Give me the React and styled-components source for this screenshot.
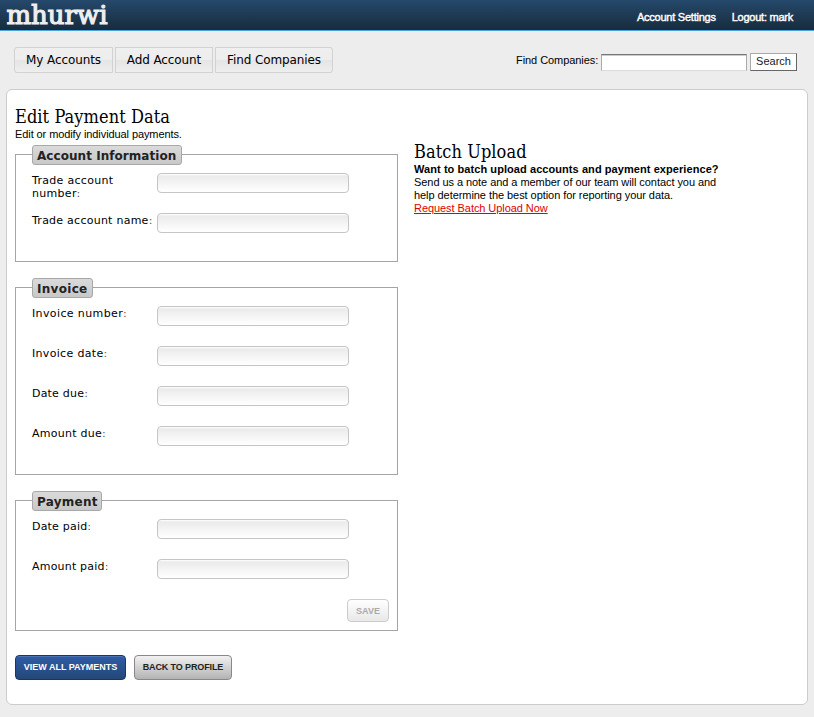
import React from "react";
import styled, { createGlobalStyle } from "styled-components";

const GlobalStyle = createGlobalStyle`
  *, *::before, *::after { box-sizing: border-box; }
  body {
    margin: 0;
    background: #ededed;
    color: #000;
    font: 11px/13px "Liberation Sans", Arial, sans-serif;
  }
`;

const Page = styled.div`
  min-height: 717px;
`;

const Header = styled.header`
  display: flex;
  justify-content: space-between;
  height: 31px;
  padding: 0 21px 0 6px;
  border-bottom: 1px solid #4aa3da;
  background: linear-gradient(#25486b, #172c3d);
`;

const Logo = styled.svg`
  display: block;
  width: 104px;
  height: 30px;
  overflow: visible;
  fill: #eee;
  stroke: #eee;
  stroke-width: 1.2px;
  font: 26px "DejaVu Serif", serif;
`;

const AccountLinks = styled.nav`
  display: flex;
  gap: 16px;
  padding-top: 11px;
`;

const AccountLink = styled.a`
  color: #fff;
  white-space: nowrap;
  -webkit-text-stroke: 0.4px #fff;
  letter-spacing: -0.24px;
`;

const Toolbar = styled.div`
  display: flex;
  justify-content: space-between;
  align-items: flex-start;
  height: 58px;
  padding: 16px 17px 0 14px;
`;

const Tabs = styled.nav`
  display: flex;
  gap: 2px;
`;

const Tab = styled.a`
  width: ${(p) => p.$width}px;
  height: 26px;
  border: 1px solid #d2d2d2;
  border-radius: ${(p) => p.$radius || "0"};
  background: linear-gradient(#efefef 0%, #ededed 50%, #e5e5e5 52%, #eee 100%);
  font: 12px/24px "DejaVu Sans", Verdana, sans-serif;
  text-align: center;
  white-space: nowrap;
  letter-spacing: -0.1px;
`;

const SearchForm = styled.form`
  display: flex;
  padding-top: 6px;
`;

const SearchLabel = styled.label`
  width: 85px;
  padding-top: 1px;
  white-space: nowrap;
  letter-spacing: -0.06px;
`;

const SearchInput = styled.input`
  width: 146px;
  height: 17px;
  margin: 1px 3px 0 0;
  padding: 0 2px;
  border: 1px solid #aaa;
  border-top-color: #777;
  border-bottom-color: #ddd;
  background: #fff;
  box-shadow: inset 0 1px #ccc;
`;

const SearchButton = styled.button`
  width: 47px;
  height: 18px;
  padding: 0 0 2px;
  border: 1px solid;
  border-color: #aaa #666 #666 #aaa;
  background: #fff;
  color: #222;
  font: 11px/14px "Liberation Sans", Arial, sans-serif;
`;

const Card = styled.main`
  display: flex;
  width: 802px;
  height: 616px;
  margin-left: 6px;
  padding: 0 8px;
  border: 1px solid #ccc;
  border-radius: 6px;
  background: #fff;
`;

const FormColumn = styled.div`
  width: 383px;
  padding-top: 15px;
`;

const Aside = styled.aside`
  margin-left: 16px;
  padding-top: 50px;
  line-height: 13px;
  white-space: nowrap;
`;

const Title = styled.h1`
  height: 23px;
  margin: 0;
  font: 18px/23px "DejaVu Serif", serif;
  font-stretch: condensed;
  white-space: nowrap;
  letter-spacing: 0.08px;
`;

const Line = styled.div`
  letter-spacing: ${(p) => p.$spacing || "-0.06px"};
  font-weight: ${(p) => (p.$bold ? "bold" : "normal")};
`;

const RequestLink = styled.a`
  color: #e00000;
  text-decoration: underline;
`;

const Group = styled.section`
  height: ${(p) => p.$height}px;
  margin-top: ${(p) => p.$top}px;
  padding: 0 8px 0 16px;
  border: 1px solid #a5a5a5;
`;

const Legend = styled.h2`
  width: ${(p) => p.$width}px;
  height: 20px;
  margin: -10px 0 8px;
  padding-left: 4px;
  border: 1px solid #a8a8a8;
  border-radius: 3px;
  background: linear-gradient(#dadada, #c8c8c8);
  color: #222;
  font: bold 12px/20px "DejaVu Sans", Verdana, sans-serif;
  white-space: nowrap;
  letter-spacing: ${(p) => p.$spacing || "0.05px"};
`;

const Row = styled.div`
  display: flex;
  height: 40px;
`;

const Label = styled.label`
  width: 125px;
  padding-top: 1px;
  font: 11px/13px "DejaVu Sans", Verdana, sans-serif;
  letter-spacing: ${(p) => p.$spacing || "0.25px"};
  white-space: nowrap;
`;

const LabelLine = styled.span`
  display: block;
`;

const Colon = styled.span`
  color: #555;
`;

const Field = styled.input`
  width: 192px;
  height: 20px;
  padding: 0 5px;
  border: 1px solid #c5c5c5;
  border-radius: 4px;
  background: linear-gradient(#fff 0, #ebebeb 2px, #fff 100%);
`;

const themes = {
  primary: "border-color:#173760;background:linear-gradient(#2f5ca6,#234777);color:#fff;box-shadow:inset 0 1px #4d74b2;",
  neutral: "border-color:#888;background:linear-gradient(#f1f1f1,#b3b3b3);color:#222;",
  disabled: "border-color:#ccc;background:linear-gradient(#fff,#e8e8e8);color:#aaa;",
};

const Button = styled.button`
  display: block;
  width: ${(p) => p.$width}px;
  height: ${(p) => p.$height || 25}px;
  padding: ${(p) => p.$padding || "0"};
  border: 1px solid;
  border-radius: 4px;
  font: bold 9px/13px "Liberation Sans", Arial, sans-serif;
  white-space: nowrap;
  letter-spacing: ${(p) => p.$spacing || "0"};
  ${(p) => themes[p.$variant]}
`;

const SaveBar = styled.div`
  display: flex;
  justify-content: flex-end;
`;

const Actions = styled.div`
  display: flex;
  gap: 8px;
  margin-top: 24px;
`;

function FormRow({ lines, spacing }) {
  return (
    <Row>
      <Label $spacing={spacing}>
        {lines.map((line, i) => (
          <LabelLine key={line}>
            {line}
            {i === lines.length - 1 && <Colon>:</Colon>}
          </LabelLine>
        ))}
      </Label>
      <Field aria-label={lines.join(" ")} />
    </Row>
  );
}

export default function App() {
  return (
    <Page>
      <GlobalStyle />
      <Header>
        <Logo viewBox="0 0 104 30">
          <text x="0.5" y="23.5" textLength="101" lengthAdjust="spacingAndGlyphs">mhurwi</text>
        </Logo>
        <AccountLinks>
          <AccountLink>Account Settings</AccountLink>
          <AccountLink>Logout: mark</AccountLink>
        </AccountLinks>
      </Header>
      <Toolbar>
        <Tabs>
          <Tab $width={99} $radius="3px 0 0 3px">My Accounts</Tab>
          <Tab $width={98}>Add Account</Tab>
          <Tab $width={118} $radius="0 3px 3px 0">Find Companies</Tab>
        </Tabs>
        <SearchForm>
          <SearchLabel>Find Companies:</SearchLabel>
          <SearchInput aria-label="Find Companies" />
          <SearchButton type="button">Search</SearchButton>
        </SearchForm>
      </Toolbar>
      <Card>
        <FormColumn>
          <Title>Edit Payment Data</Title>
          <Line $spacing="-0.09px">Edit or modify individual payments.</Line>
          <Group $height={108} $top={13}>
            <Legend $width={150}>Account Information</Legend>
            <FormRow lines={["Trade account", "number"]} spacing="0.3px" />
            <FormRow lines={["Trade account name"]} />
          </Group>
          <Group $height={188} $top={25}>
            <Legend $width={61} $spacing="0.3px">Invoice</Legend>
            <FormRow lines={["Invoice number"]} spacing="0.38px" />
            <FormRow lines={["Invoice date"]} spacing="0.32px" />
            <FormRow lines={["Date due"]} spacing="0.2px" />
            <FormRow lines={["Amount due"]} />
          </Group>
          <Group $height={131} $top={25}>
            <Legend $width={70} $spacing="0.25px">Payment</Legend>
            <FormRow lines={["Date paid"]} spacing="0.2px" />
            <FormRow lines={["Amount paid"]} spacing="0.2px" />
            <SaveBar>
              <Button $variant="disabled" $width={42} $height={23} $padding="1px 0 0">SAVE</Button>
            </SaveBar>
          </Group>
          <Actions>
            <Button $variant="primary" $width={111}>VIEW ALL PAYMENTS</Button>
            <Button $variant="neutral" $width={98} $spacing="-0.12px">BACK TO PROFILE</Button>
          </Actions>
        </FormColumn>
        <Aside>
          <Title>Batch Upload</Title>
          <Line $bold $spacing="0.07px">Want to batch upload accounts and payment experience?</Line>
          <Line>Send us a note and a member of our team will contact you and</Line>
          <Line>help determine the best option for reporting your data.</Line>
          <Line><RequestLink>Request Batch Upload Now</RequestLink></Line>
        </Aside>
      </Card>
    </Page>
  );
}
